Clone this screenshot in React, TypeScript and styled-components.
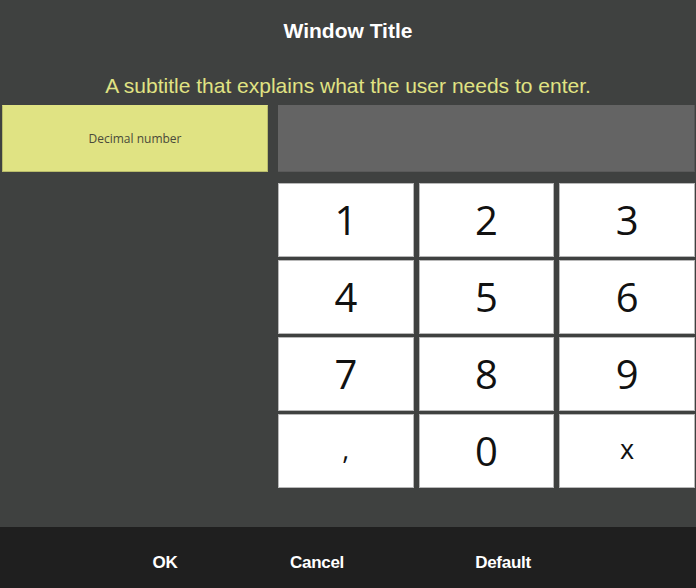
import React from "react";
import styled, { createGlobalStyle } from "styled-components";

const Global = createGlobalStyle`
  html, body { margin: 0; padding: 0; background: #3f4140; }
  #root { width: 696px; height: 588px; }
`;

const Page = styled.div`
  width: 696px;
  height: 588px;
  display: flex;
  flex-direction: column;
  background: #3f4140;
  overflow: hidden;
`;

const Title = styled.h1`
  margin: 0;
  height: 62px;
  line-height: 62px;
  text-align: center;
  color: #ffffff;
  font-family: "Liberation Sans", Arial, sans-serif;
  font-weight: 700;
  font-size: 21px;
`;

const Subtitle = styled.p`
  margin: 0;
  height: 43px;
  box-sizing: border-box;
  padding-top: 12px;
  line-height: 24px;
  text-align: center;
  color: #e0e383;
  font-family: "Liberation Sans", Arial, sans-serif;
  font-size: 21px;
`;

const Main = styled.div`
  flex: 1;
  display: grid;
  grid-template-columns: 266px 417px;
  column-gap: 10px;
  padding-left: 2px;
  align-items: start;
`;

const Label = styled.div`
  height: 67px;
  box-sizing: border-box;
  background: #e0e383;
  border: 1px solid #b9bc6c;
  border-top-color: #e0e383;
  display: flex;
  align-items: center;
  justify-content: center;
  color: #4a4a3a;
  font-family: "Open Sans", "Noto Sans", sans-serif;
  font-size: 12px;
`;

const Right = styled.div`
  display: flex;
  flex-direction: column;
  gap: 11px;
`;

const Display = styled.div`
  height: 67px;
  box-sizing: border-box;
  background: #646464;
  border-right: 1px solid #555555;
  border-bottom: 1px solid #5a5a5a;
`;

const Keypad = styled.div`
  display: grid;
  grid-template-columns: repeat(3, 1fr);
  grid-auto-rows: 74px;
  column-gap: 5px;
  row-gap: 3px;
`;

const Key = styled.button<{ $small?: boolean }>`
  margin: 0;
  padding: 0 0 ${(p) => (p.$small ? "5px" : "0")};
  box-sizing: border-box;
  background: #ffffff;
  border: 1px solid #b8b8b8;
  color: #111111;
  font-family: "Open Sans", "Noto Sans", sans-serif;
  font-size: ${(p) => (p.$small ? "27px" : "40px")};
  font-weight: 400;
  line-height: 1;
  display: flex;
  align-items: center;
  justify-content: center;
  cursor: pointer;
`;

const Footer = styled.div`
  height: 61px;
  box-sizing: border-box;
  padding-top: 11px;
  background: #1f1f1f;
  display: flex;
  align-items: center;
  padding-left: 105px;
  gap: 16px;
`;

const FooterButton = styled.button<{ $w: number }>`
  width: ${(p) => p.$w}px;
  height: 40px;
  margin: 0;
  padding: 0;
  background: transparent;
  border: none;
  color: #ffffff;
  font-family: "Liberation Sans", Arial, sans-serif;
  font-weight: 700;
  font-size: 17px;
  letter-spacing: -0.3px;
  text-align: center;
  cursor: pointer;
`;

const keys = ["1", "2", "3", "4", "5", "6", "7", "8", "9", ",", "0", "x"];

export default function App() {
  return (
    <>
      <Global />
      <Page>
        <Title>Window Title</Title>
        <Subtitle>A subtitle that explains what the user needs to enter.</Subtitle>
        <Main>
          <Label>Decimal number</Label>
          <Right>
            <Display />
            <Keypad>
              {keys.map((k) => (
                <Key key={k} $small={k === "x" || k === ","}>
                  {k}
                </Key>
              ))}
            </Keypad>
          </Right>
        </Main>
        <Footer>
          <FooterButton $w={120}>OK</FooterButton>
          <FooterButton $w={152}>Cancel</FooterButton>
          <FooterButton $w={188}>Default</FooterButton>
        </Footer>
      </Page>
    </>
  );
}
